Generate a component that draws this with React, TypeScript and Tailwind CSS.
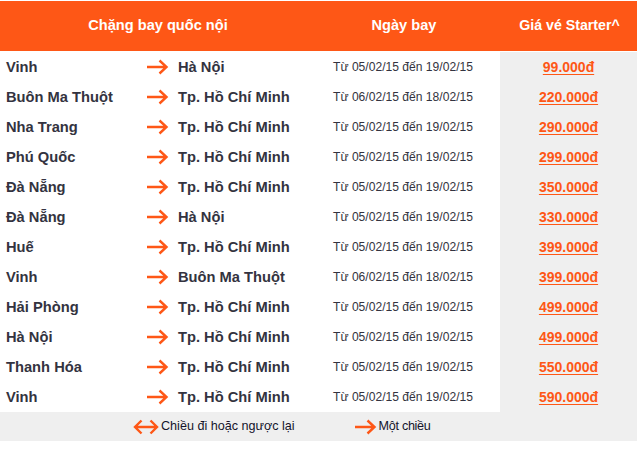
import React from "react";

const O = "#fe5716";

const rows: [string, string, string, string][] = [
  ["Vinh", "Hà Nội", "Từ 05/02/15 đến 19/02/15", "99.000đ"],
  ["Buôn Ma Thuột", "Tp. Hồ Chí Minh", "Từ 06/02/15 đến 18/02/15", "220.000đ"],
  ["Nha Trang", "Tp. Hồ Chí Minh", "Từ 05/02/15 đến 19/02/15", "290.000đ"],
  ["Phú Quốc", "Tp. Hồ Chí Minh", "Từ 05/02/15 đến 19/02/15", "299.000đ"],
  ["Đà Nẵng", "Tp. Hồ Chí Minh", "Từ 05/02/15 đến 19/02/15", "350.000đ"],
  ["Đà Nẵng", "Hà Nội", "Từ 05/02/15 đến 19/02/15", "330.000đ"],
  ["Huế", "Tp. Hồ Chí Minh", "Từ 05/02/15 đến 19/02/15", "399.000đ"],
  ["Vinh", "Buôn Ma Thuột", "Từ 06/02/15 đến 18/02/15", "399.000đ"],
  ["Hải Phòng", "Tp. Hồ Chí Minh", "Từ 05/02/15 đến 19/02/15", "499.000đ"],
  ["Hà Nội", "Tp. Hồ Chí Minh", "Từ 05/02/15 đến 19/02/15", "499.000đ"],
  ["Thanh Hóa", "Tp. Hồ Chí Minh", "Từ 05/02/15 đến 19/02/15", "550.000đ"],
  ["Vinh", "Tp. Hồ Chí Minh", "Từ 05/02/15 đến 19/02/15", "590.000đ"],
];

function Arrow() {
  return (
    <svg width="23" height="16" viewBox="0 0 23 16" fill="none">
      <path d="M1 8H20.5M13.5 1.5L20.5 8L13.5 14.5" stroke={O} strokeWidth="2.4" />
    </svg>
  );
}

function DoubleArrow() {
  return (
    <svg width="26" height="16" viewBox="0 0 26 16" fill="none">
      <path d="M2 8H24M8.5 1.5L2 8L8.5 14.5M17.5 1.5L24 8L17.5 14.5" stroke={O} strokeWidth="2.4" />
    </svg>
  );
}

export default function App() {
  return (
    <div
      className="w-[637px] h-[453px] bg-white"
      style={{ fontFamily: '"Liberation Sans", Arial, sans-serif' }}
    >
      <div className="h-px" />
      <div className="flex h-[50px] bg-[#fe5716] text-white font-bold text-[14.6px] items-center">
        <div className="w-[316px] text-center">Chặng bay quốc nội</div>
        <div className="w-[184px] text-center pr-[8px]">Ngày bay</div>
        <div className="flex-1 text-center pl-[2px] text-[14.2px]">Giá vé Starter^</div>
      </div>
      <div className="h-px bg-white" />
      {rows.map((r, i) => (
        <div key={i} className="flex h-[30px] items-center">
          <div className="w-[316px] h-full flex items-center text-[14.7px] font-bold text-[#333340]">
            <div className="w-[146px] pl-[6px]">{r[0]}</div>
            <Arrow />
            <div className="pl-[9px]">{r[1]}</div>
          </div>
          <div className="w-[184px] h-full flex items-center justify-center pr-[10px] text-[12.1px] text-[#333340]">
            {r[2]}
          </div>
          <div className="flex-1 h-full bg-[#efefef] flex items-center justify-center">
            <span className="text-[14px] font-bold text-[#fe5716] underline underline-offset-2">{r[3]}</span>
          </div>
        </div>
      ))}
      <div className="h-[29px] bg-[#efefef] flex items-center text-[12.6px] text-[#14142b]">
        <div className="w-[133px]" />
        <DoubleArrow />
        <span className="ml-[2px]">Chiều đi hoặc ngược lại</span>
        <div className="w-[59px]" />
        <Arrow />
        <span className="ml-[2px] tracking-[-0.3px]">Một chiều</span>
      </div>
    </div>
  );
}
